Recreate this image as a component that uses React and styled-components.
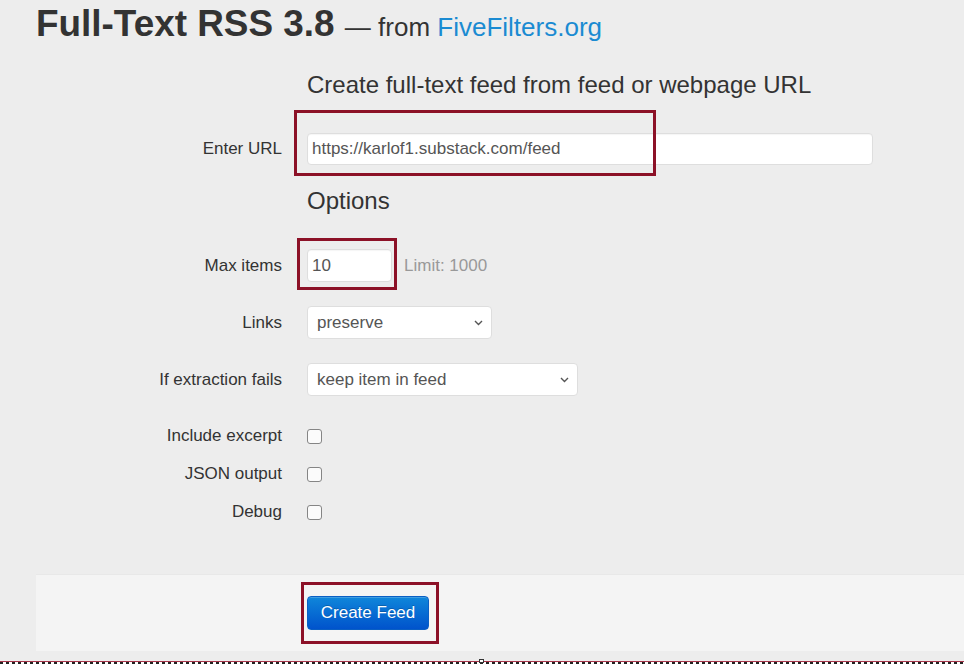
import React from "react";
import styled, { createGlobalStyle } from "styled-components";

const Global = createGlobalStyle`
  html, body { margin: 0; padding: 0; background: #ededed; }
  * { box-sizing: border-box; }
`;

const Page = styled.div`
  position: relative;
  height: 664px;
  overflow: hidden;
  padding-left: 36px;
  background: #ededed;
  font-family: "Liberation Sans", Arial, sans-serif;
  color: #333;
`;

const Title = styled.h1`
  margin: 0;
  padding-top: 4px;
  font-size: 36.9px;
  line-height: 40px;
  font-weight: 700;
  color: #333;
  white-space: nowrap;
`;

const Sub = styled.small`
  font-size: 26px;
  font-weight: 400;
  color: #333;
`;

const Link = styled.a`
  color: #1b8bd2;
  text-decoration: none;
`;

const Form = styled.form`
  display: flex;
  flex-direction: column;
  margin: 0;
`;

const Row = styled.div`
  display: grid;
  grid-template-columns: 246px auto;
  column-gap: 25px;
  align-items: center;
  margin-top: ${(p) => p.$mt}px;
  height: ${(p) => p.$h}px;
`;

const Legend = styled.div`
  grid-column: 2;
  font-size: 24px;
  line-height: 30px;
  color: #333;
`;

const Label = styled.label`
  text-align: right;
  font-size: 17px;
  color: #333;
`;

const Controls = styled.div`
  display: flex;
  align-items: center;
`;

const Marked = styled.span`
  position: relative;
  display: inline-flex;
`;

const Frame = styled.span`
  position: absolute;
  top: ${(p) => p.$t}px;
  left: ${(p) => p.$l}px;
  right: ${(p) => p.$r}px;
  bottom: ${(p) => p.$b}px;
  border: 3px solid #8c1127;
  pointer-events: none;
`;

const TextInput = styled.input`
  width: ${(p) => p.$w}px;
  height: ${(p) => p.$h}px;
  padding: 0 4px;
  border: 1px solid #dedede;
  border-radius: 4px;
  background: #fff;
  box-shadow: inset 0 1px 1px rgba(0, 0, 0, 0.04);
  font-family: inherit;
  font-size: 17px;
  color: #555;
  outline: none;
`;

const Hint = styled.span`
  margin-left: 12px;
  font-size: 17px;
  color: #999;
`;

const SelectWrap = styled.span`
  position: relative;
  display: inline-flex;
`;

const Select = styled.select`
  appearance: none;
  width: ${(p) => p.$w}px;
  height: 33px;
  padding: 0 24px 0 9px;
  border: 1px solid #dedede;
  border-radius: 4px;
  background: #fff;
  font-family: inherit;
  font-size: 17px;
  color: #555;
  outline: none;
`;

const Chevron = styled.svg`
  position: absolute;
  right: 9px;
  top: 14px;
  pointer-events: none;
`;

const Check = styled.span`
  display: inline-block;
  width: 15px;
  height: 15px;
  border: 1px solid #858585;
  border-radius: 3px;
  background: #fbfbfb;
`;

const Actions = styled.div`
  margin-top: 43px;
  padding: 21px 0 21px 271px;
  background: #f4f4f4;
  border-top: 1px solid #e8e8e8;
`;

const Button = styled.button`
  width: 122px;
  height: 34px;
  border: 1px solid #0a5fc4;
  border-radius: 4px;
  background: linear-gradient(#0f86da, #0053cc);
  color: #fff;
  font-family: inherit;
  font-size: 17px;
  text-shadow: 0 -1px 0 rgba(0, 0, 0, 0.2);
  box-shadow: inset 0 1px 0 rgba(255, 255, 255, 0.2);
  padding: 0;
`;

const Ants = styled.div`
  position: absolute;
  left: 0;
  right: 0;
  bottom: 0;
  height: 3px;
  border-top: 1px solid #a8364a;
  background: repeating-linear-gradient(90deg, #222 0 3px, #fff 3px 6px);
`;

const Handle = styled.span`
  position: absolute;
  left: 479px;
  bottom: 1px;
  width: 5px;
  height: 4px;
  border: 1px solid #333;
  background: #fff;
`;

const SelectBox = ({ w, value }) => (
  <SelectWrap>
    <Select $w={w} defaultValue={value}>
      <option>{value}</option>
    </Select>
    <Chevron width="9" height="6" viewBox="0 0 9 6">
      <path d="M1 1 L4.5 4.5 L8 1" fill="none" stroke="#555" strokeWidth="1.4" />
    </Chevron>
  </SelectWrap>
);

const CheckRow = ({ label, mt = 0 }) => (
  <Row $mt={mt} $h={38}>
    <Label>{label}</Label>
    <Controls>
      <Check />
    </Controls>
  </Row>
);

export default function App() {
  return (
    <>
      <Global />
      <Page>
        <Title>
          Full-Text RSS 3.8 <Sub>— from <Link href="#">FiveFilters.org</Link></Sub>
        </Title>
        <Form onSubmit={(e) => e.preventDefault()}>
          <Row $mt={23} $h={30}>
            <Legend>Create full-text feed from feed or webpage URL</Legend>
          </Row>
          <Row $mt={33} $h={32}>
            <Label>Enter URL</Label>
            <Controls>
              <Marked>
                <TextInput $w={566} $h={32} defaultValue="https://karlof1.substack.com/feed" />
                <Frame $t={-23} $l={-13} $r={217} $b={-11} />
              </Marked>
            </Controls>
          </Row>
          <Row $mt={21} $h={30}>
            <Legend>Options</Legend>
          </Row>
          <Row $mt={33} $h={33}>
            <Label>Max items</Label>
            <Controls>
              <Marked>
                <TextInput $w={85} $h={33} defaultValue="10" />
                <Frame $t={-11} $l={-10} $r={-5} $b={-8} />
              </Marked>
              <Hint>Limit: 1000</Hint>
            </Controls>
          </Row>
          <Row $mt={24} $h={33}>
            <Label>Links</Label>
            <Controls>
              <SelectBox w={185} value="preserve" />
            </Controls>
          </Row>
          <Row $mt={24} $h={33}>
            <Label>If extraction fails</Label>
            <Controls>
              <SelectBox w={271} value="keep item in feed" />
            </Controls>
          </Row>
          <CheckRow label="Include excerpt" mt={21} />
          <CheckRow label="JSON output" />
          <CheckRow label="Debug" />
          <Actions>
            <Marked>
              <Button type="submit">Create Feed</Button>
              <Frame $t={-14} $l={-6} $r={-10} $b={-14} />
            </Marked>
          </Actions>
        </Form>
        <Ants />
        <Handle />
      </Page>
    </>
  );
}
